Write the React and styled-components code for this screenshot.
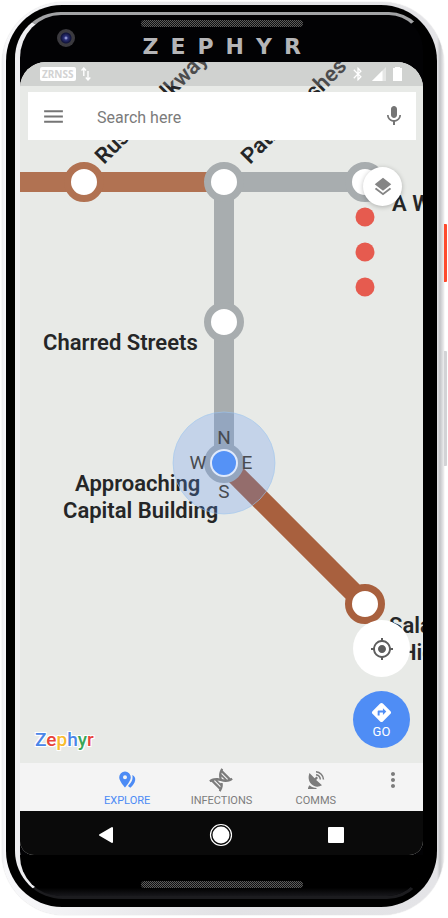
import React from "react";
import styled, { createGlobalStyle } from "styled-components";
import {
  MdMenu, MdMic, MdLayers, MdMyLocation, MdDirections, MdBluetooth, MdMoreVert,
} from "react-icons/md";
import { FaDna } from "react-icons/fa";

const GlobalStyle = createGlobalStyle`
  *, *::before, *::after { box-sizing: border-box; }
  body { margin: 0; background: #fff; font-family: Roboto, "Liberation Sans", sans-serif; }
  button, input { font: inherit; border: 0; padding: 0; background: none; color: inherit; }
  button { cursor: pointer; }
  svg { display: block; }
`;

/* ---------- device ---------- */
const Page = styled.div`
  min-height: 100vh;
  display: grid;
  grid-template-columns: 1fr 4px;
  padding: 2px 0 3px 2px;
`;
const Shell = styled.div`
  display: flex;
  flex-direction: column;
  padding: 3px 7px 8px 4px;
  border-radius: 62px;
  background: linear-gradient(90deg, #ececef 0, #f8f8fa 3px, #e2e2e5 50%, #e4e4e7 calc(100% - 7px), #c4c5c8 calc(100% - 4px), #eeeeef 100%);
  box-shadow: 0 0 1px #bbb;
`;
const Bezel = styled.div`
  flex: 1;
  display: flex;
  flex-direction: column;
  padding: 7px 10px 8px 9px;
  border-radius: 56px;
  background: #000;
`;
const Face = styled.div`
  flex: 1;
  display: flex;
  flex-direction: column;
  border-style: solid;
  border-width: 3px 4px 3px 5px;
  border-color: #a2a3a5 #000 #1c1c1f #eeeef1;
  border-radius: 46px 38px 40px 48px;
  background: #020204;
`;
const SideKeys = styled.div`
  display: flex;
  flex-direction: column;
  gap: 69px;
  padding-top: 222px;
`;
const SideKey = styled.div`
  width: 3px;
  height: ${(p) => p.$height};
  border-radius: 0 1px 1px 0;
  background: ${(p) => p.$color};
`;
const Head = styled.header`
  display: grid;
  grid-template-columns: 1fr 162px 1fr;
  height: 47px;
  padding-top: 5px;
`;
const Camera = styled.div`
  width: 18px;
  height: 18px;
  margin: 9px 0 0 37px;
  border-radius: 50%;
  background: radial-gradient(circle, #c4cbff 0, #2c3179 2px, #11143b 5px, #3c3b40 6px, #3a393e 9px);
`;
const Speaker = styled.div`
  width: 162px;
  height: 7px;
  border-radius: 4px;
  background: conic-gradient(#5c5c5c 25%, #101010 0 50%, #5c5c5c 0 75%, #101010 0) 0 0 / 2px 2px;
`;
const Brand = styled.div`
  margin-top: 8px;
  padding-left: 2px;
  font: 700 22px/24px "DejaVu Sans", sans-serif;
  letter-spacing: 12px;
  white-space: nowrap;
  color: #b5b5b7;
`;
const Chin = styled.div`
  display: flex;
  justify-content: center;
  height: 41px;
  padding-top: 26px;
  border-radius: 0 0 36px 40px;
  background: linear-gradient(#000 80%, #17171b);
`;

/* ---------- screen ---------- */
const Screen = styled.main`
  flex: 1;
  display: flex;
  flex-direction: column;
  overflow: hidden;
  border-radius: 26px 26px 14px 14px;
  background: #e8eae7;
`;
const MapArea = styled.section`
  flex: 1;
  min-height: 600px;
  position: relative;
  display: flex;
  flex-direction: column;
`;
const MapDrawing = styled.svg`
  position: absolute;
  inset: 0;
  width: 100%;
  height: 100%;
  font-family: Roboto, "Liberation Sans", sans-serif;
`;
const StationName = styled.text`
  font-size: 22px;
  font-weight: 600;
  fill: #252627;
`;
const Heading = styled.text`
  font-size: 19px;
  fill: #484b50;
  text-anchor: middle;
`;
const StatusBar = styled.div`
  position: relative;
  display: flex;
  align-items: center;
  height: 24px;
  padding: 0 20px;
  background: rgba(160, 160, 160, 0.32);
  color: #fff;
`;
const Carrier = styled.span`
  padding: 0 2px;
  border-radius: 2px;
  background: #fff;
  color: #d2d2d2;
  font: 700 10px/14px "Noto Sans", sans-serif;
`;
const DataArrows = styled.svg`
  width: 10px;
  height: 14px;
  margin-left: 5px;
`;
const StatusIcons = styled.div`
  display: flex;
  align-items: center;
  gap: 6px;
  margin-left: auto;
`;
const SearchBar = styled.form`
  position: relative;
  display: flex;
  align-items: center;
  height: 48px;
  margin: 6px 7px 0 8px;
  padding: 0 10px 0 13px;
  background: #fff;
  color: #757575;
`;
const SearchInput = styled.input`
  flex: 1;
  min-width: 0;
  margin-left: 32px;
  padding-top: 2px;
  font-size: 16px;
  outline: 0;
  &::placeholder { color: #7b7b7b; opacity: 1; }
`;
const IconButton = styled.button`
  display: grid;
  place-items: center;
  width: 24px;
  height: 24px;
`;
const Fab = styled.button`
  position: relative;
  display: flex;
  flex-direction: column;
  align-items: center;
  justify-content: center;
  width: ${(p) => p.$size};
  height: ${(p) => p.$size};
  border-radius: 50%;
  background: ${(p) => (p.$primary ? "#4f8df5" : "#fff")};
  color: ${(p) => (p.$primary ? "#fff" : "#5d5d5d")};
  font-size: 13px;
  line-height: 15px;
  box-shadow: ${(p) => (p.$raised ? "0 1px 5px rgba(0, 0, 0, 0.25)" : "none")};
`;
const LayersSlot = styled.div`
  display: flex;
  justify-content: flex-end;
  padding: 27px 21px 0 0;
  color: #858585;
`;
const MapFooter = styled.div`
  position: relative;
  display: flex;
  justify-content: space-between;
  align-items: flex-end;
  margin-top: auto;
  padding: 0 13px 15px 15px;
`;
const Actions = styled.div`
  display: flex;
  flex-direction: column;
  gap: 14px;
`;
const Wordmark = styled.div`
  margin-bottom: -3px;
  font-size: 19px;
  line-height: 22px;
  text-shadow: 0 0 2px #fff, 1px 1px 0 #fff, -1px -1px 0 #fff, 1px -1px 0 #fff, -1px 1px 0 #fff;
`;
const Tint = styled.span`
  color: ${(p) => p.$color};
  font-weight: 500;
`;
const TabBar = styled.nav`
  display: grid;
  grid-template-columns: 1fr 1fr 1fr 60px;
  height: 48px;
  padding: 0 0 0 60px;
  background: #f4f4f4;
`;
const Tab = styled.button`
  display: flex;
  flex-direction: column;
  align-items: center;
  gap: 4px;
  padding-top: 7px;
  font-size: 11px;
  line-height: 14px;
  color: ${(p) => (p.$active ? "#4c8bf5" : "#7c7c7c")};
  &::after {
    content: "";
    width: 32px;
    height: 2px;
    margin-top: auto;
    background: ${(p) => (p.$active ? "#4c8bf5" : "transparent")};
  }
`;
const MoreTab = styled(Tab)`
  padding-top: 5px;
`;
const TabIcon = styled.svg`
  width: 20px;
  height: 20px;
`;
const DnaIcon = styled(FaDna)`
  width: 18px;
  height: 18px;
  margin: 1px;
  transform: rotate(45deg);
`;
const SystemBar = styled.div`
  display: grid;
  grid-template-columns: 1fr 1fr 1fr;
  height: 44px;
  padding: 3px 30px 0 28px;
  background: #0a0a0a;
`;
const SystemKey = styled.button`
  display: grid;
  place-items: center;
`;

const letters = [
  ["Z", "#4a86e8"], ["e", "#e8453c"], ["p", "#f9bb2d"],
  ["h", "#4a86e8"], ["y", "#3aa757"], ["r", "#e8453c"],
];

function Node({ x, y, color }) {
  return <circle cx={x} cy={y} r="16.5" fill="#fff" stroke={color} strokeWidth="7" />;
}

function TransitMap() {
  const gray = "#a8adaf";
  return (
    <MapDrawing viewBox="0 0 403 701" preserveAspectRatio="xMidYMin slice" role="img" aria-label="Transit map">
      <rect width="403" height="701" fill="#e8eae7" />
      <g strokeWidth="20" fill="none">
        <path d="M-60 120H204" stroke="#b17252" />
        <path d="M204 120H345M204 120V401" stroke={gray} />
        <path d="M204 401L345 542" stroke="#a8603e" />
      </g>
      <Node x="64" y="120" color="#b17252" />
      <Node x="204" y="120" color={gray} />
      <Node x="345" y="120" color={gray} />
      <Node x="204" y="260" color={gray} />
      <Node x="204" y="401" color={gray} />
      <Node x="345" y="542" color="#a8603e" />
      <g fill="#e65b4f">
        <circle cx="345" cy="155" r="9.5" />
        <circle cx="345" cy="190" r="9.5" />
        <circle cx="345" cy="225" r="9.5" />
      </g>
      <StationName transform="translate(84 103) rotate(-45)">Rusty Walkway</StationName>
      <StationName transform="translate(230 103) rotate(-45)">Path of Ashes</StationName>
      <StationName x="372" y="149">A W</StationName>
      <StationName x="23" y="288">Charred Streets</StationName>
      <StationName x="55" y="429">Approaching</StationName>
      <StationName x="43" y="456">Capital Building</StationName>
      <StationName x="369" y="571">Salar</StationName>
      <StationName x="381" y="598">Hid</StationName>
      <circle cx="204" cy="401" r="51" fill="#5b93f0" fillOpacity=".26" stroke="#9fc6ee" strokeOpacity=".6" />
      <circle cx="204" cy="401" r="13" fill="#5592f6" stroke="#dfe9fb" strokeWidth="2" />
      <Heading x="204" y="382">N</Heading>
      <Heading x="178" y="407">W</Heading>
      <Heading x="227" y="407">E</Heading>
      <Heading x="204" y="436">S</Heading>
    </MapDrawing>
  );
}

export default function App() {
  return (
    <>
      <GlobalStyle />
      <Page>
        <Shell>
          <Bezel>
            <Face>
              <Head>
                <Camera />
                <div>
                  <Speaker />
                  <Brand>ZEPHYR</Brand>
                </div>
              </Head>
              <Screen>
                <MapArea>
                  <TransitMap />
                  <StatusBar>
                    <Carrier>ZRNSS</Carrier>
                    <DataArrows viewBox="0 0 10 14" fill="none" stroke="#fff" strokeWidth="1.400" aria-hidden="true">
                      <path d="M2.800 9V1M.500 3.500L2.800 1L5 3.500M7 4V13M4.800 10.500L7 13L9.300 10.500" />
                    </DataArrows>
                    <StatusIcons>
                      <MdBluetooth size={16} />
                      <svg width="14" height="14" viewBox="0 0 14 14" aria-hidden="true">
                        <path d="M14 0V14H0z" fill="#fff" fillOpacity=".45" />
                        <path d="M10.500 3.500V14H0z" fill="#fff" />
                      </svg>
                      <svg width="11" height="14" viewBox="0 0 11 14" aria-hidden="true">
                        <path d="M1 1H3V0H8V1H10V14H1z" fill="#fff" />
                      </svg>
                    </StatusIcons>
                  </StatusBar>
                  <SearchBar role="search">
                    <IconButton type="button" aria-label="Menu"><MdMenu size={25} /></IconButton>
                    <SearchInput type="text" aria-label="Search" placeholder="Search here" />
                    <IconButton type="button" aria-label="Voice search"><MdMic size={24} /></IconButton>
                  </SearchBar>
                  <LayersSlot>
                    <Fab $size="39px" $raised aria-label="Map layers"><MdLayers size={22} color="#858585" /></Fab>
                  </LayersSlot>
                  <MapFooter>
                    <Wordmark>
                      {letters.map(([ch, color]) => <Tint key={ch} $color={color}>{ch}</Tint>)}
                    </Wordmark>
                    <Actions>
                      <Fab $size="57px" aria-label="My location"><MdMyLocation size={24} /></Fab>
                      <Fab $size="57px" $primary><MdDirections size={23} />GO</Fab>
                    </Actions>
                  </MapFooter>
                </MapArea>
                <TabBar>
                  <Tab $active aria-current="page">
                    <TabIcon viewBox="0 0 20 20" aria-hidden="true">
                      <path fill="currentColor" fillRule="evenodd" d="M8 1.500A5.800 5.800 0 0 0 2.200 7.300C2.200 11.500 8 17.500 8 17.500S13.800 11.500 13.800 7.300A5.800 5.800 0 0 0 8 1.500zM8 5.200A2 2 0 1 1 8 9.200A2 2 0 0 1 8 5.200z" />
                      <path fill="currentColor" d="M15.300 5C20 7 19 13 13.300 17.800L11 16C14.800 12 16.200 9.500 15.300 5z" />
                    </TabIcon>
                    EXPLORE
                  </Tab>
                  <Tab><DnaIcon aria-hidden="true" />INFECTIONS</Tab>
                  <Tab>
                    <TabIcon viewBox="0 0 20 20" aria-hidden="true">
                      <path fill="currentColor" d="M3.500 3L8.600 8.300L10.500 6.500L12 8L10.200 9.900L16 15.200C12.500 17.300 8.500 17.200 5.500 14.200C2.300 11 2 6.800 3.500 3zM3.600 15.200C5.500 17 8 17.800 10.500 18V19H2C2 17.500 2.600 16 3.600 15.200z" />
                      <path fill="none" stroke="currentColor" strokeWidth="1.500" d="M10 4.800A5 5 0 0 1 14.300 9.500M10 1.800A8 8 0 0 1 17.500 9.500" />
                    </TabIcon>
                    COMMS
                  </Tab>
                  <MoreTab aria-label="More"><MdMoreVert size={24} /></MoreTab>
                </TabBar>
                <SystemBar>
                  <SystemKey aria-label="Back">
                    <svg width="16" height="18" viewBox="0 0 16 18"><path d="M14 2V16L2 9z" fill="#fff" stroke="#fff" strokeWidth="2" strokeLinejoin="round" /></svg>
                  </SystemKey>
                  <SystemKey aria-label="Home">
                    <svg width="24" height="24" viewBox="0 0 24 24"><circle cx="12" cy="12" r="10.500" fill="none" stroke="#fff" strokeWidth="1.200" /><circle cx="12" cy="12" r="8.500" fill="#fff" /></svg>
                  </SystemKey>
                  <SystemKey aria-label="Recent apps">
                    <svg width="16" height="16" viewBox="0 0 16 16"><rect width="16" height="16" rx="1" fill="#fff" /></svg>
                  </SystemKey>
                </SystemBar>
              </Screen>
              <Chin><Speaker /></Chin>
            </Face>
          </Bezel>
        </Shell>
        <SideKeys>
          <SideKey $height="58px" $color="#ff4a2e" />
          <SideKey $height="115px" $color="#d3d3d6" />
        </SideKeys>
      </Page>
    </>
  );
}
